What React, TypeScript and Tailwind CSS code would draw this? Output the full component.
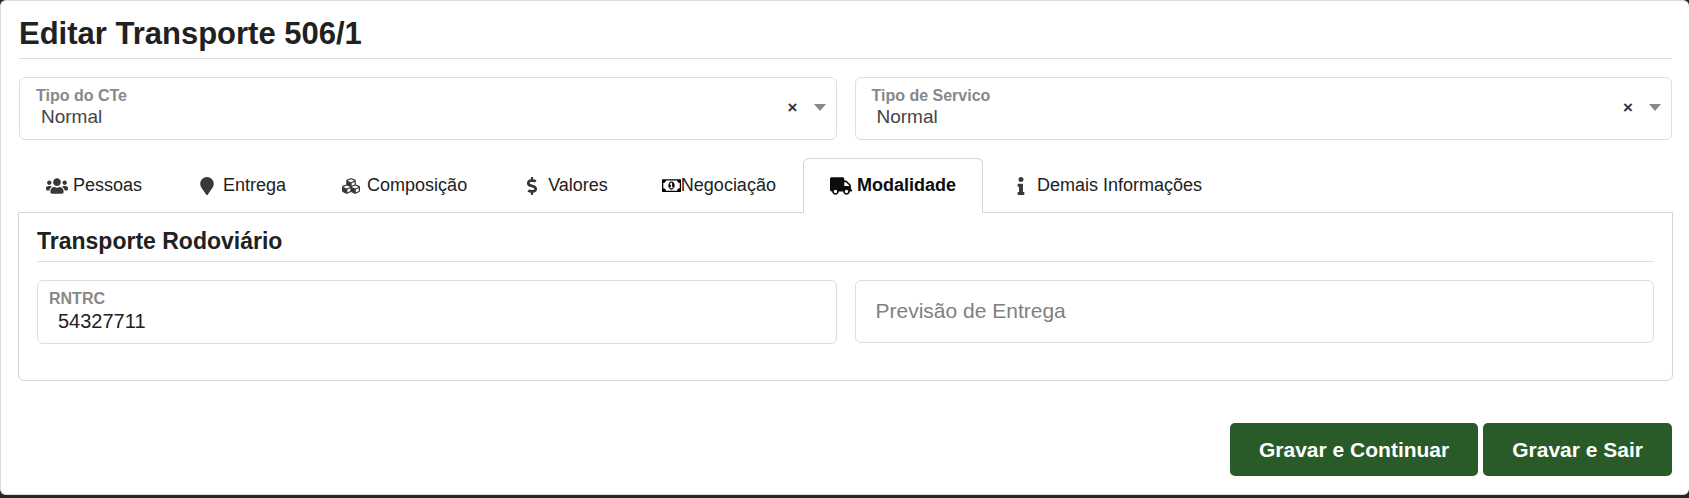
import { FaCubes, FaDollarSign, FaInfo, FaMapMarker, FaTruck, FaUsers } from "react-icons/fa";

interface TabData {
  label: string;
  icon: React.ElementType;
}

function MoneyIcon({ className }: { className?: string }) {
  return (
    <svg viewBox="0 128 1920 1536" fill="currentColor" className={className}>
      <path d="M768 1152h384v-96h-128v-448h-114l-148 137 77 80q42-37 55-57h2v288h-128v96zM1280 896q0 70-21 142t-59.5 134-101.5 101-138 39-138-39-101.5-101-59.5-134-21-142 21-142 59.5-134 101.5-101 138-39 138 39 101.5 101 59.5 134 21 142zM1792 1152v-512q-106 0-181-75t-75-181h-1152q0 106-75 181t-181 75v512q106 0 181 75t75 181h1152q0-106 75-181t181-75zM1920 320v1152q0 26-19 45t-45 19h-1792q-26 0-45-19t-19-45v-1152q0-26 19-45t45-19h1792q26 0 45 19t19 45z" />
    </svg>
  );
}

const tabs: TabData[] = [
  { label: "Pessoas", icon: FaUsers },
  { label: "Entrega", icon: FaMapMarker },
  { label: "Composição", icon: FaCubes },
  { label: "Valores", icon: FaDollarSign },
  { label: "Negociação", icon: MoneyIcon },
  { label: "Modalidade", icon: FaTruck },
  { label: "Demais Informações", icon: FaInfo },
];

const activeTab = "Modalidade";

function SelectField({ id, label }: { id: string; label: string }) {
  return (
    <div className="flex items-center rounded-md border border-[#dedede] py-2 pr-2.5 pl-4">
      <div className="min-w-0 flex-1">
        <label htmlFor={id} className="block text-[16px] leading-5 font-bold text-[#888]">
          {label}
        </label>
        <select
          id={id}
          defaultValue="Normal"
          className="block w-full appearance-none bg-transparent pb-1 pl-[5px] text-[19px] leading-[21px] text-[#444]"
        >
          <option>Normal</option>
        </select>
      </div>
      <button type="button" aria-label="Limpar" className="px-1 pb-0.5 text-[17px] leading-5 font-bold text-[#333]">
        ×
      </button>
      <svg viewBox="0 0 12 7" className="mb-0.5 ml-3 h-[7px] w-3 fill-[#888]">
        <path d="M0 0h12L6 7z" />
      </svg>
    </div>
  );
}

export default function App() {
  return (
    <div className="min-h-screen bg-[#2a2627] font-['Liberation_Sans',Arial,sans-serif] text-[#212121]">
      <main className="rounded-md border border-r-0 border-[#dcdcdc] bg-white pt-3 pr-[17px] pb-[18px] pl-[18px]">
        <h1 className="border-b border-[#dedede] pb-1 text-[31px] leading-[41px] font-bold">
          Editar Transporte 506/1
        </h1>

        <div className="mt-[18px] grid grid-cols-2 gap-[18px]">
          <SelectField id="tipo-cte" label="Tipo do CTe" />
          <SelectField id="tipo-servico" label="Tipo de Servico" />
        </div>

        {/* Tabs */}
        <div role="tablist" className="mt-[18px] flex">
          {tabs.map((tab) => {
            const Icon = tab.icon;
            const active = tab.label === activeTab;
            const money = tab.label === "Negociação";
            return (
              <button
                key={tab.label}
                type="button"
                role="tab"
                aria-selected={active}
                className={`relative -mb-px flex h-[55px] items-center rounded-t-md border px-[26px] text-[18px] whitespace-nowrap ${
                  active
                    ? "border-[#d4d4d4] border-b-white bg-white font-bold text-[#0c0c0c]"
                    : "border-transparent text-[#212121]"
                }`}
              >
                {money ? (
                  <Icon className="w-[19px] text-black" />
                ) : (
                  <Icon className={`mr-[5px] h-[18px] w-[22px] ${active ? "" : "text-[#383838]"}`} />
                )}
                {tab.label}
              </button>
            );
          })}
        </div>

        <section className="-mx-px rounded-b-md border border-[#d4d4d4] px-[18px] pt-3 pb-9">
          <h2 className="border-b border-[#dedede] pb-1 text-[23px] leading-8 font-bold">
            Transporte Rodoviário
          </h2>
          <div className="mt-[18px] grid grid-cols-2 items-start gap-[18px]">
            <div className="rounded-md border border-[#dedede] pt-2 pb-2 pl-[11px]">
              <label htmlFor="rntrc" className="block text-[16px] leading-5 font-bold text-[#888]">
                RNTRC
              </label>
              <input
                id="rntrc"
                defaultValue="54327711"
                className="block w-full pb-0.5 pl-[9px] text-[20px] leading-6 outline-none"
              />
            </div>
            <input
              aria-label="Previsão de Entrega"
              placeholder="Previsão de Entrega"
              className="h-[63px] w-full rounded-md border border-[#dedede] px-5 pb-0.5 text-[21px] outline-none placeholder:text-[#808080]"
            />
          </div>
        </section>

        <div className="mt-[42px] flex justify-end gap-[5px]">
          <button type="button" className="rounded-[5px] bg-[#285b28] px-[29px] py-3 text-[21px] leading-[29px] font-bold text-white">
            Gravar e Continuar
          </button>
          <button type="button" className="rounded-[5px] bg-[#285b28] px-[29px] py-3 text-[21px] leading-[29px] font-bold text-white">
            Gravar e Sair
          </button>
        </div>
      </main>
    </div>
  );
}
